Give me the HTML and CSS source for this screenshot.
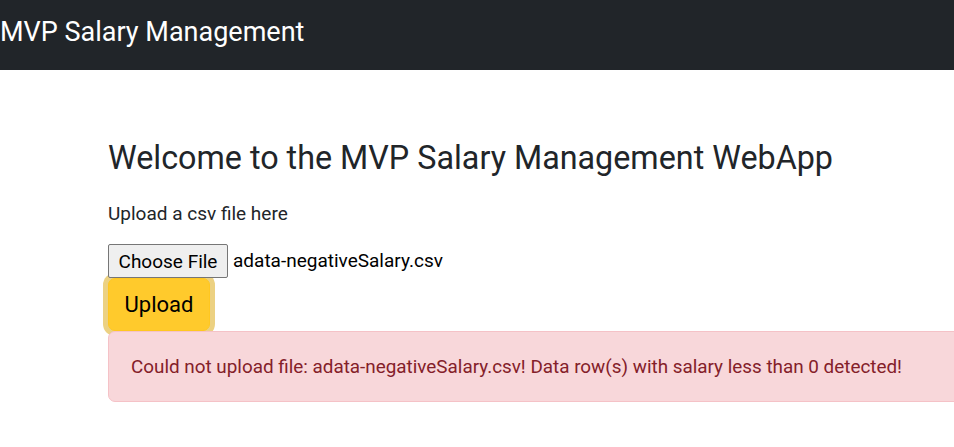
FILE: index.html
```html
<!DOCTYPE html>
<html>
<head>
<meta charset="utf-8">
<link rel="stylesheet" href="styles.css">
</head>
<body>
<nav class="navbar"><span class="brand">MVP Salary Management</span></nav>
<main class="container">
  <h2 class="title">Welcome to the MVP Salary Management WebApp</h2>
  <p class="lead-text">Upload a csv file here</p>
  <div class="file-row">
    <button class="file-btn" type="button">Choose File</button>
    <span class="file-name">adata-negativeSalary.csv</span>
  </div>
  <button class="upload-btn" type="button">Upload</button>
  <div class="alert">Could not upload file: adata-negativeSalary.csv! Data row(s) with salary less than 0 detected!</div>
</main>
</body>
</html>
```
FILE: styles.css
```css
html, body { margin: 0; padding: 0; }
body {
  font-family: Roboto, "Liberation Sans", sans-serif;
  font-size: 19px;
  line-height: 1.5;
  color: #212529;
  background: #fff;
  overflow: hidden;
  width: 954px;
}
.navbar {
  height: 70px;
  background: #212529;
  display: flex;
  align-items: center;
}
.brand {
  color: #fff;
  font-size: 27px;
  line-height: 32px;
  margin-top: -6px;
}
.container {
  padding: 69px 0 0 108px;
  width: 900px;
}
.title {
  font-weight: 400;
  font-size: 32.3px;
  line-height: 39px;
  margin: 0 0 22px;
}
.lead-text {
  margin: 0 0 16px;
  line-height: 28px;
}
.file-row { display: flex; align-items: center; height: 34px; }
.file-btn {
  font-family: Roboto, "Liberation Sans", sans-serif;
  font-size: 19px;
  color: #000;
  background: #efefef;
  border: 1px solid #767676;
  border-radius: 2px;
  height: 34px;
  width: 120px;
  padding: 0;
  margin: 0 5px 0 0;
}
.file-name { color: #000; }
.upload-btn {
  display: block;
  margin: 0;
  font-family: Roboto, "Liberation Sans", sans-serif;
  font-size: 22px;
  color: #000;
  background: #ffca2c;
  border: 1px solid #ffc720;
  border-radius: 7px;
  height: 53px;
  width: 102px;
  padding: 0;
  box-shadow: 0 0 0 5px rgba(217,164,6,.5);
}
.alert {
  background: #f8d7da;
  border: 1px solid #f5c2c7;
  border-radius: 7px;
  color: #842029;
  font-size: 18.88px;
  padding: 21px 22px 20px;
  line-height: 28px;
  white-space: nowrap;
}
```
